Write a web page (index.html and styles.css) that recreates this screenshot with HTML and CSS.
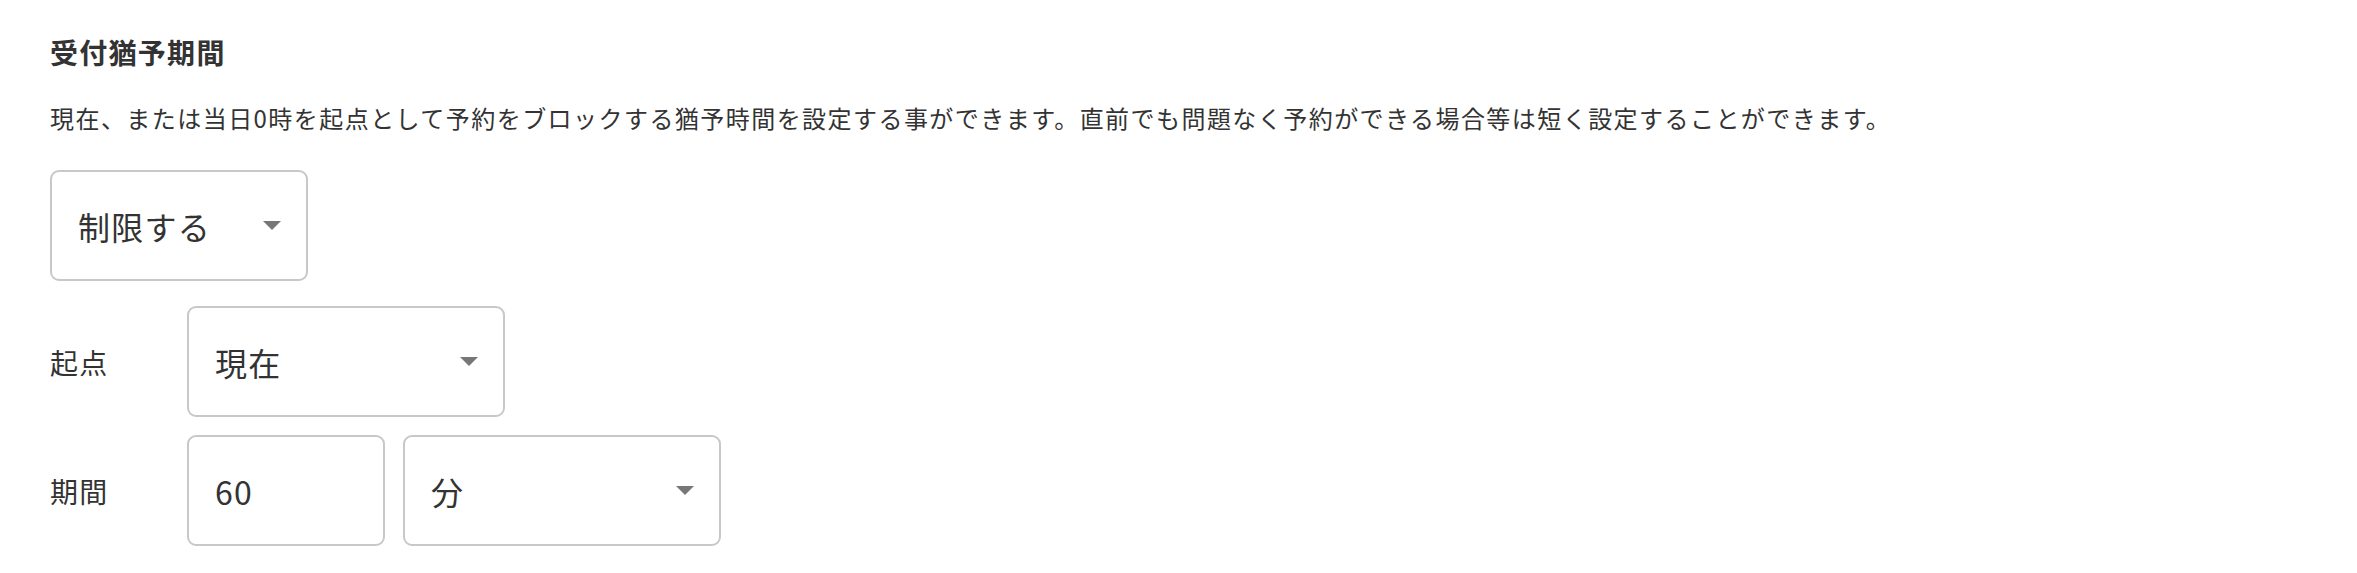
FILE: index.html
```html
<!DOCTYPE html>
<html lang="ja">
<head>
<meta charset="utf-8">
<title>受付猶予期間</title>
<link rel="stylesheet" href="styles.css">
</head>
<body>
<section class="setting">
  <h2 class="setting-title">受付猶予期間</h2>
  <p class="setting-desc">現在、または当日0時を起点として予約をブロックする猶予時間を設定する事ができます。直前でも問題なく予約ができる場合等は短く設定することができます。</p>
  <div class="select select-limit">
    <span class="select-value">制限する</span>
    <span class="select-arrow"></span>
  </div>
  <div class="field-row field-row-origin">
    <span class="field-label">起点</span>
    <div class="select select-wide">
      <span class="select-value">現在</span>
      <span class="select-arrow"></span>
    </div>
  </div>
  <div class="field-row">
    <span class="field-label">期間</span>
    <div class="controls">
      <div class="text-input">60</div>
      <div class="select select-wide">
        <span class="select-value">分</span>
        <span class="select-arrow"></span>
      </div>
    </div>
  </div>
</section>
</body>
</html>
```

FILE: styles.css
```css
* {
  box-sizing: border-box;
}

html, body {
  margin: 0;
  padding: 0;
  background: #ffffff;
}

body {
  font-family: "Noto Sans CJK JP", "Noto Sans", sans-serif;
  color: #333333;
  letter-spacing: 0.08em;
}

.setting {
  padding: 32px 0 0 50px;
  display: flex;
  flex-direction: column;
  align-items: flex-start;
}

.setting-title {
  margin: 0;
  font-size: 28px;
  line-height: 40px;
  font-weight: 700;
  color: #333333;
}

.setting-desc {
  margin: 28px 0 0 0;
  font-size: 24px;
  line-height: 36px;
  letter-spacing: 1.45px;
  color: #333333;
}

.select,
.text-input {
  height: 111px;
  border: 2px solid #c8c8c8;
  border-radius: 9px;
  background: #ffffff;
  display: flex;
  align-items: center;
  padding: 0 25px 0 26px;
  font-size: 32px;
  line-height: 1;
  color: #333333;
}

.select {
  justify-content: space-between;
}

.select-limit {
  margin-top: 34px;
  width: 258px;
}

.select-wide {
  width: 318px;
}

.text-input {
  width: 198px;
}

.select-arrow {
  width: 0;
  height: 0;
  border-left: 9px solid transparent;
  border-right: 9px solid transparent;
  border-top: 9px solid #777777;
}

.field-row {
  display: flex;
  align-items: center;
  margin-top: 18px;
}

.field-row-origin {
  margin-top: 25px;
}

.field-label {
  width: 137px;
  font-size: 28px;
  line-height: 40px;
  color: #333333;
}

.controls {
  display: flex;
  gap: 18px;
}
```
